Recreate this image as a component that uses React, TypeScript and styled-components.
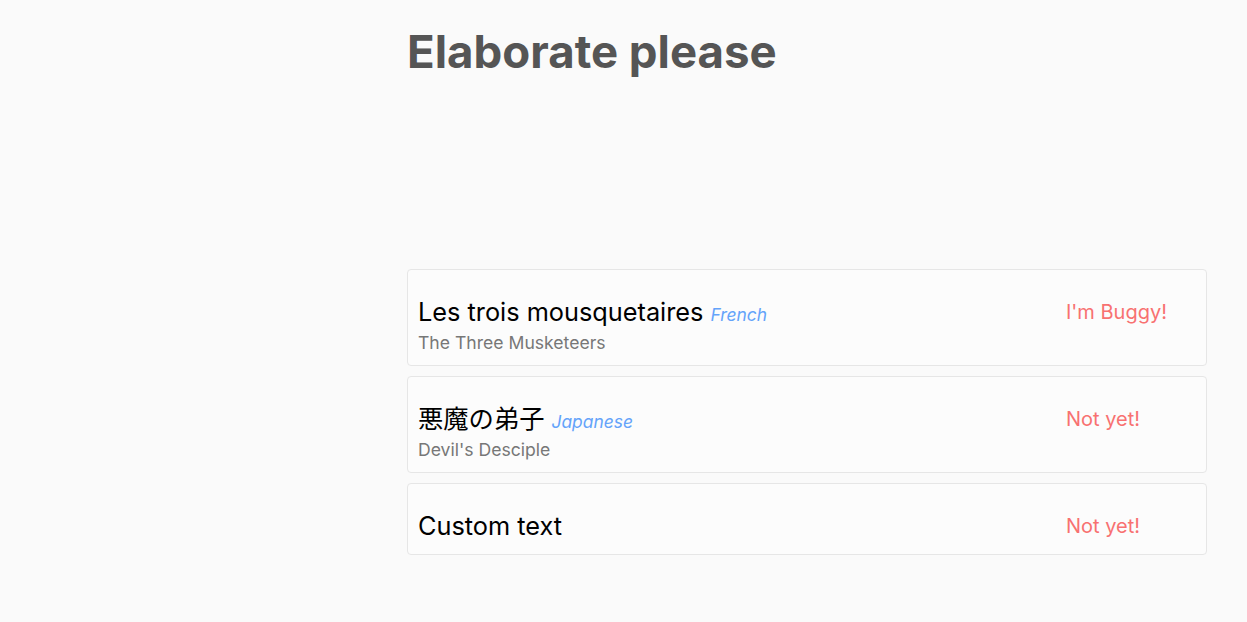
import React from "react";
import styled, { createGlobalStyle } from "styled-components";

const Global = createGlobalStyle`
  html, body { margin: 0; padding: 0; background: #fafafa; }
  body { font-family: Inter, "Noto Sans CJK JP", sans-serif; }
`;

const Page = styled.div`
  min-height: 622px;
  padding-left: 407px;
  padding-top: 25px;
  box-sizing: border-box;
`;

const Main = styled.main`
  width: 800px;
`;

const Heading = styled.h1`
  margin: 0 0 190px;
  font-size: 45.6px;
  line-height: 54px;
  font-weight: 700;
  color: #555555;
`;

const List = styled.div`
  display: flex;
  flex-direction: column;
  gap: 10px;
`;

const Card = styled.div`
  display: flex;
  align-items: flex-start;
  border: 1px solid #e6e6e6;
  border-radius: 4px;
  background: #fcfcfc;
  padding: 27px 0 9px 10px;
`;

const Texts = styled.div`
  flex: 1;
  display: flex;
  flex-direction: column;
`;

const TitleLine = styled.div`
  display: flex;
  align-items: baseline;
  gap: 7px;
`;

const Title = styled.span`
  font-size: 25.3px;
  line-height: 30px;
  color: #000;
`;

const Lang = styled.span`
  font-size: 17.4px;
  font-style: italic;
  color: #64a3fa;
`;

const Subtitle = styled.div`
  margin-top: 3px;
  font-size: 17.6px;
  line-height: 26px;
  color: #777;
`;

const Status = styled.div`
  width: 140px;
  padding-bottom: 4px;
  font-size: 20px;
  line-height: 30px;
  color: #f87171;
`;

const items = [
  { title: "Les trois mousquetaires", lang: "French", sub: "The Three Musketeers", status: "I'm Buggy!" },
  { title: "悪魔の弟子", lang: "Japanese", sub: "Devil's Desciple", status: "Not yet!" },
  { title: "Custom text", lang: "", sub: "", status: "Not yet!" },
];

export default function App() {
  return (
    <>
      <Global />
      <Page>
        <Main>
          <Heading>Elaborate please</Heading>
          <List>
            {items.map((it) => (
              <Card key={it.title}>
                <Texts>
                  <TitleLine>
                    <Title>{it.title}</Title>
                    {it.lang && <Lang>{it.lang}</Lang>}
                  </TitleLine>
                  {it.sub && <Subtitle>{it.sub}</Subtitle>}
                </Texts>
                <Status>{it.status}</Status>
              </Card>
            ))}
          </List>
        </Main>
      </Page>
    </>
  );
}
